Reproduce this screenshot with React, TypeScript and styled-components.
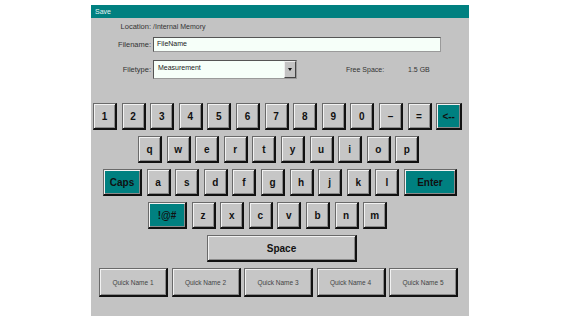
import styled, { createGlobalStyle } from 'styled-components';

const GlobalStyle = createGlobalStyle`
  html, body {
    margin: 0;
    padding: 0;
    background: #ffffff;
  }
  body {
    font-family: "Liberation Sans", Arial, sans-serif;
  }
`;

const Page = styled.div`
  padding-top: 5px;
  height: 316px;
  box-sizing: border-box;
`;

const Dialog = styled.div`
  width: 378px;
  height: 311px;
  margin-left: 91px;
  background: #c3c3c3;
  display: flex;
  flex-direction: column;
`;

const TitleBar = styled.div`
  height: 13px;
  background: #008080;
  color: #e6f2f2;
  font-size: 7px;
  line-height: 13px;
  padding-left: 4px;
`;

const Form = styled.div`
  display: flex;
  flex-direction: column;
  padding-top: 3px;
`;

const FieldRow = styled.div<{ $height: number; $mt?: number }>`
  display: flex;
  align-items: center;
  height: ${p => p.$height}px;
  margin-top: ${p => p.$mt ?? 0}px;
`;

const Label = styled.div`
  width: 60px;
  text-align: right;
  font-size: 7.5px;
  color: #333;
  padding-right: 2px;
`;

const Value = styled.div`
  font-size: 7px;
  color: #333;
`;

const TextInput = styled.div`
  width: 288px;
  height: 15px;
  box-sizing: border-box;
  background: #f6fff9;
  border-top: 1px solid #555;
  border-left: 1px solid #555;
  border-right: 1px solid #9a9a9a;
  border-bottom: 1px solid #9a9a9a;
  font-size: 7px;
  color: #222;
  padding: 2px 3px;
`;

const Select = styled.div`
  width: 144px;
  height: 19px;
  box-sizing: border-box;
  background: #f6fff9;
  border-top: 1px solid #555;
  border-left: 1px solid #555;
  border-right: 1px solid #9a9a9a;
  border-bottom: 1px solid #9a9a9a;
  display: flex;
  align-items: flex-start;
  justify-content: space-between;
  font-size: 7px;
  color: #222;
`;

const SelectText = styled.span`
  padding: 3px 0 0 4px;
`;

const SelectButton = styled.div`
  width: 12px;
  height: 17px;
  box-sizing: border-box;
  background: #c3c3c3;
  border-left: 1px solid #eee;
  border-top: 1px solid #eee;
  border-right: 1px solid #444;
  border-bottom: 1px solid #444;
  display: flex;
  align-items: center;
  justify-content: center;
`;

const Arrow = styled.div`
  width: 0;
  height: 0;
  border-left: 2.5px solid transparent;
  border-right: 2.5px solid transparent;
  border-top: 3px solid #111;
`;

const FreeLabel = styled.div`
  font-size: 7px;
  color: #333;
  margin-left: 49px;
  width: 62px;
`;

const Keyboard = styled.div`
  display: flex;
  flex-direction: column;
  gap: 6px;
  margin-top: 24px;
`;

const KeyRow = styled.div<{ $indent: number; $gap?: number }>`
  display: flex;
  gap: ${p => p.$gap ?? 4.6}px;
  padding-left: ${p => p.$indent}px;
`;

const Key = styled.div<{ $w?: number; $h?: number; $accent?: boolean; $small?: boolean }>`
  width: ${p => p.$w ?? 24}px;
  height: ${p => p.$h ?? 27}px;
  box-sizing: border-box;
  flex-shrink: 0;
  background: ${p => (p.$accent ? '#008080' : '#c6c6c6')};
  border-top: 1px solid #6a6a6a;
  border-left: 1px solid #6a6a6a;
  border-right: 2px solid #111;
  border-bottom: 2px solid #111;
  box-shadow: inset 1px 1px 0 #f2f2f2, inset -1px -1px 0 #8a8a8a;
  display: flex;
  align-items: center;
  justify-content: center;
  font-size: ${p => (p.$small ? 6.5 : 10)}px;
  font-weight: ${p => (p.$small ? 'normal' : 'bold')};
  color: ${p => (p.$small ? '#444' : '#111')};
`;

const row1 = ['1', '2', '3', '4', '5', '6', '7', '8', '9', '0', '–', '='];
const row2 = ['q', 'w', 'e', 'r', 't', 'y', 'u', 'i', 'o', 'p'];
const row3 = ['a', 's', 'd', 'f', 'g', 'h', 'j', 'k', 'l'];
const row4 = ['z', 'x', 'c', 'v', 'b', 'n', 'm'];
const quick = [1, 2, 3, 4, 5];

export default function App() {
  return (
    <Page>
      <GlobalStyle />
      <Dialog>
        <TitleBar>Save</TitleBar>
        <Form>
          <FieldRow $height={10}>
            <Label>Location:</Label>
            <Value>/Internal Memory</Value>
          </FieldRow>
          <FieldRow $height={15} $mt={6}>
            <Label>Filename:</Label>
            <TextInput>FileName</TextInput>
          </FieldRow>
          <FieldRow $height={19} $mt={8}>
            <Label>Filetype:</Label>
            <Select>
              <SelectText>Measurement</SelectText>
              <SelectButton>
                <Arrow />
              </SelectButton>
            </Select>
            <FreeLabel>Free Space:</FreeLabel>
            <Value>1.5 GB</Value>
          </FieldRow>
        </Form>
        <Keyboard>
          <KeyRow $indent={2}>
            {row1.map(k => (
              <Key key={k}>{k}</Key>
            ))}
            <Key $w={26} $accent>&lt;--</Key>
          </KeyRow>
          <KeyRow $indent={47}>
            {row2.map(k => (
              <Key key={k}>{k}</Key>
            ))}
          </KeyRow>
          <KeyRow $indent={12}>
            <Key $w={39} $accent>Caps</Key>
            {row3.map(k => (
              <Key key={k}>{k}</Key>
            ))}
            <Key $w={53} $accent>Enter</Key>
          </KeyRow>
          <KeyRow $indent={57}>
            <Key $w={39} $accent>!@#</Key>
            {row4.map(k => (
              <Key key={k}>{k}</Key>
            ))}
          </KeyRow>
          <KeyRow $indent={116}>
            <Key $w={150}>Space</Key>
          </KeyRow>
          <KeyRow $indent={8} $gap={3.5}>
            {quick.map(n => (
              <Key key={n} $w={69} $h={29} $small>
                Quick Name {n}
              </Key>
            ))}
          </KeyRow>
        </Keyboard>
      </Dialog>
    </Page>
  );
}
